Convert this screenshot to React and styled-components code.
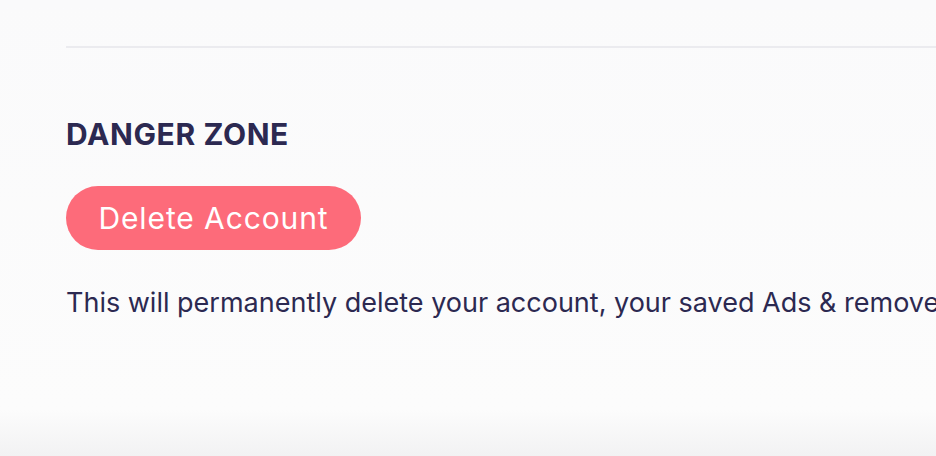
import React from "react";
import styled, { createGlobalStyle } from "styled-components";

const GlobalStyle = createGlobalStyle`
  html, body {
    margin: 0;
    padding: 0;
    background: #fafafb;
  }
  body {
    font-family: Inter, "Noto Sans", sans-serif;
    -webkit-font-smoothing: antialiased;
  }
`;

const Page = styled.div`
  height: 456px;
  overflow: hidden;
  box-sizing: border-box;
  padding: 46px 0 0 66px;
  background: linear-gradient(to bottom, #fafafb 0, #fcfcfc 410px, #f2f2f3 456px);
`;

const Divider = styled.hr`
  margin: 0;
  border: none;
  height: 2px;
  background: #ebebef;
`;

const Section = styled.section`
  display: flex;
  flex-direction: column;
  align-items: flex-start;
  padding-top: 66px;
`;

const Heading = styled.h2`
  margin: 0;
  font-size: 30px;
  line-height: 40px;
  font-weight: 700;
  color: #2c2951;
  letter-spacing: 0.6px;
`;

const DangerButton = styled.button`
  margin-top: 32px;
  height: 64px;
  width: 295px;
  padding: 0;
  border: none;
  border-radius: 32px;
  background: #fd6b7a;
  color: #ffffff;
  font-family: Inter, "Noto Sans", sans-serif;
  font-size: 30px;
  font-weight: 400;
  letter-spacing: 0.9px;
  cursor: pointer;
`;

const Note = styled.p`
  margin: 36px 0 0;
  font-size: 27px;
  line-height: 34px;
  color: #2c2951;
  white-space: nowrap;
`;

export default function App() {
  return (
    <Page>
      <GlobalStyle />
      <Divider />
      <Section>
        <Heading>DANGER ZONE</Heading>
        <DangerButton>Delete Account</DangerButton>
        <Note>This will permanently delete your account, your saved Ads &amp; remove all of your data.</Note>
      </Section>
    </Page>
  );
}
